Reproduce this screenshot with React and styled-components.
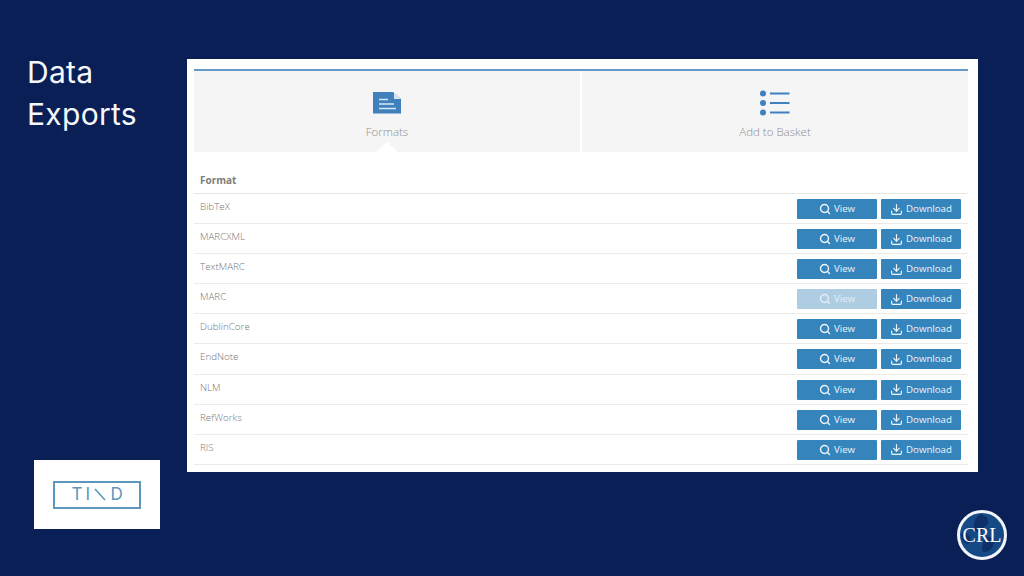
import React from "react";
import styled, { createGlobalStyle } from "styled-components";
import { Search, Download } from "lucide-react";

const Global = createGlobalStyle`
  html, body { margin: 0; padding: 0; background: #0b1f57; }
  * { box-sizing: border-box; }
`;

const Slide = styled.div`
  width: 1024px;
  height: 576px;
  overflow: hidden;
  background: #0b1f57;
  display: flex;
`;

const Sidebar = styled.aside`
  width: 187px;
  height: 576px;
  padding: 51px 0 47px 27px;
  display: flex;
  flex-direction: column;
`;

const Title = styled.h1`
  margin: 0;
  font: 400 30px/42px Inter, "Liberation Sans", sans-serif;
  color: #f6f8fb;
  letter-spacing: 0.3px;
`;

const LogoCard = styled.div`
  width: 126px;
  height: 69px;
  margin-top: auto;
  margin-left: 7px;
  background: #fff;
  display: flex;
  align-items: center;
  justify-content: center;
`;

const LogoFrame = styled.div`
  width: 88px;
  height: 28px;
  margin-left: -1px;
  padding-left: 17px;
  border: 2px solid #5c97bd;
  display: flex;
  align-items: center;
`;

const Wordmark = styled.span`
  font: 400 17px/1 Inter, "Liberation Sans", sans-serif;
  color: #5c97bd;
  width: ${(p) => p.$width}px;
  display: block;
`;

const LogoSlash = styled.svg`
  width: 12px;
  height: 13px;
  margin-right: 5px;
  display: block;
`;

const Main = styled.main`
  flex: 1;
  padding-top: 59px;
  display: flex;
  flex-direction: column;
`;

const Panel = styled.section`
  width: 791px;
  height: 413px;
  background: #fff;
  padding: 10px 10px 0 7px;
`;

const Tabs = styled.div`
  display: grid;
  grid-template-columns: 1fr 1fr;
  column-gap: 2px;
  height: 83px;
  border-top: 2px solid #659ac6;
`;

const Tab = styled.div`
  position: relative;
  background: #f5f5f5;
  display: flex;
  flex-direction: column;
  align-items: center;
  padding-top: 19px;
`;

const TabIcon = styled.svg`
  width: 30px;
  height: 26px;
  display: block;
`;

const TabLabel = styled.span`
  margin-top: 8px;
  font: 300 11.5px/16px "Open Sans", "Liberation Sans", sans-serif;
  color: #8e8e8e;
`;

const Pointer = styled.span`
  position: absolute;
  left: 50%;
  bottom: 0;
  width: 0;
  height: 0;
  margin-left: -11px;
  border-left: 11px solid transparent;
  border-right: 11px solid transparent;
  border-bottom: 10px solid #fff;
`;

const Table = styled.div`
  margin-top: 16px;
`;

const HeaderRow = styled.div`
  height: 26px;
  padding-left: 6px;
  border-bottom: 1px solid #e6e6e6;
  font: 700 10px/25px "Open Sans", "Liberation Sans", sans-serif;
  color: #7d7d78;
`;

const Row = styled.div`
  height: 30.1px;
  padding: 5px 7px 0 6px;
  border-bottom: 1px solid #ebebeb;
  display: flex;
  justify-content: space-between;
  align-items: flex-start;
`;

const RowName = styled.span`
  font: 300 9.8px/16px "Open Sans", "Liberation Sans", sans-serif;
  color: #777;
`;

const Actions = styled.div`
  display: flex;
  gap: 4px;
`;

const Button = styled.button`
  width: 80px;
  height: 20px;
  padding: 0;
  border: 0;
  border-radius: 1px;
  background: ${(p) => (p.$muted ? "#aecde2" : "#3584bc")};
  color: ${(p) => (p.$muted ? "#e3eef6" : "#eef5fa")};
  font: 400 9.7px/20px "Open Sans", "Liberation Sans", sans-serif;
  display: flex;
  align-items: center;
  justify-content: center;
  gap: 3px;
`;

const Footer = styled.div`
  display: flex;
  justify-content: flex-end;
  padding: 38px 17px 0 0;
`;

const Seal = styled.div`
  position: relative;
  width: 50px;
  height: 50px;
  border-radius: 50%;
  border: 3px solid #f2f5f9;
  background: #164a86;
  overflow: hidden;
  display: flex;
  align-items: center;
  justify-content: center;
`;

const SealGlobe = styled.svg`
  position: absolute;
  inset: 0;
  width: 100%;
  height: 100%;
`;

const SealText = styled.span`
  position: relative;
  font: 400 20px/1 "Liberation Serif", serif;
  color: #fff;
`;

const FORMATS = [
  { name: "BibTeX" },
  { name: "MARCXML" },
  { name: "TextMARC" },
  { name: "MARC", muted: true },
  { name: "DublinCore" },
  { name: "EndNote" },
  { name: "NLM" },
  { name: "RefWorks" },
  { name: "RIS" },
];

const FileIcon = () => (
  <TabIcon viewBox="0 0 30 26">
    <path d="M1 2h20l8 7v14.500H1z" fill="#3f80bd" />
    <path d="M22 2.500l7 6.500h-7z" fill="#d6e4f1" />
    <path d="M7 9.500h9M7 14h15M7 18.500h17" stroke="#dbe8f3" strokeWidth="1.600" fill="none" />
  </TabIcon>
);

const ListIcon = () => (
  <TabIcon viewBox="0 0 30 26">
    <g fill="#3f80bd">
      <circle cx="3" cy="3.500" r="3" />
      <circle cx="3" cy="13" r="3" />
      <circle cx="3" cy="22.500" r="3" />
    </g>
    <path d="M10 3.500h19.500M10 13h19.500M10 22.500h19.500" stroke="#3f80bd" strokeWidth="2" fill="none" />
  </TabIcon>
);

export default function App() {
  return (
    <Slide>
      <Global />
      <Sidebar>
        <Title>
          Data
          <br />
          Exports
        </Title>
        <LogoCard>
          <LogoFrame>
            <Wordmark $width={14}>T</Wordmark>
            <Wordmark $width={8}>I</Wordmark>
            <LogoSlash viewBox="0 0 12 13">
              <path d="M1 1l10 11" stroke="#5c97bd" strokeWidth="1.600" fill="none" />
            </LogoSlash>
            <Wordmark $width={12}>D</Wordmark>
          </LogoFrame>
        </LogoCard>
      </Sidebar>
      <Main>
        <Panel>
          <Tabs>
            <Tab>
              <FileIcon />
              <TabLabel>Formats</TabLabel>
              <Pointer />
            </Tab>
            <Tab>
              <ListIcon />
              <TabLabel>Add to Basket</TabLabel>
            </Tab>
          </Tabs>
          <Table>
            <HeaderRow>Format</HeaderRow>
            {FORMATS.map((f) => (
              <Row key={f.name}>
                <RowName>{f.name}</RowName>
                <Actions>
                  <Button $muted={f.muted}>
                    <Search size={12} strokeWidth={2.8} />
                    View
                  </Button>
                  <Button>
                    <Download size={13} strokeWidth={2.2} />
                    Download
                  </Button>
                </Actions>
              </Row>
            ))}
          </Table>
        </Panel>
        <Footer>
          <Seal>
            <SealGlobe viewBox="0 0 44 44">
              <path d="M20 1c6 2 9 5 8 9s-5 3-6 7-5 3-7 0-2-10 5-16z" fill="#0e2f68" />
              <path d="M26 24c5-1 9 1 8 6s-5 9-9 9-3-5-2-8 0-6 3-7z" fill="#0e2f68" />
              <path d="M2 20c4-1 7 1 8 5s-2 7-5 5-5-7-3-10z" fill="#0e2f68" />
            </SealGlobe>
            <SealText>CRL</SealText>
          </Seal>
        </Footer>
      </Main>
    </Slide>
  );
}
